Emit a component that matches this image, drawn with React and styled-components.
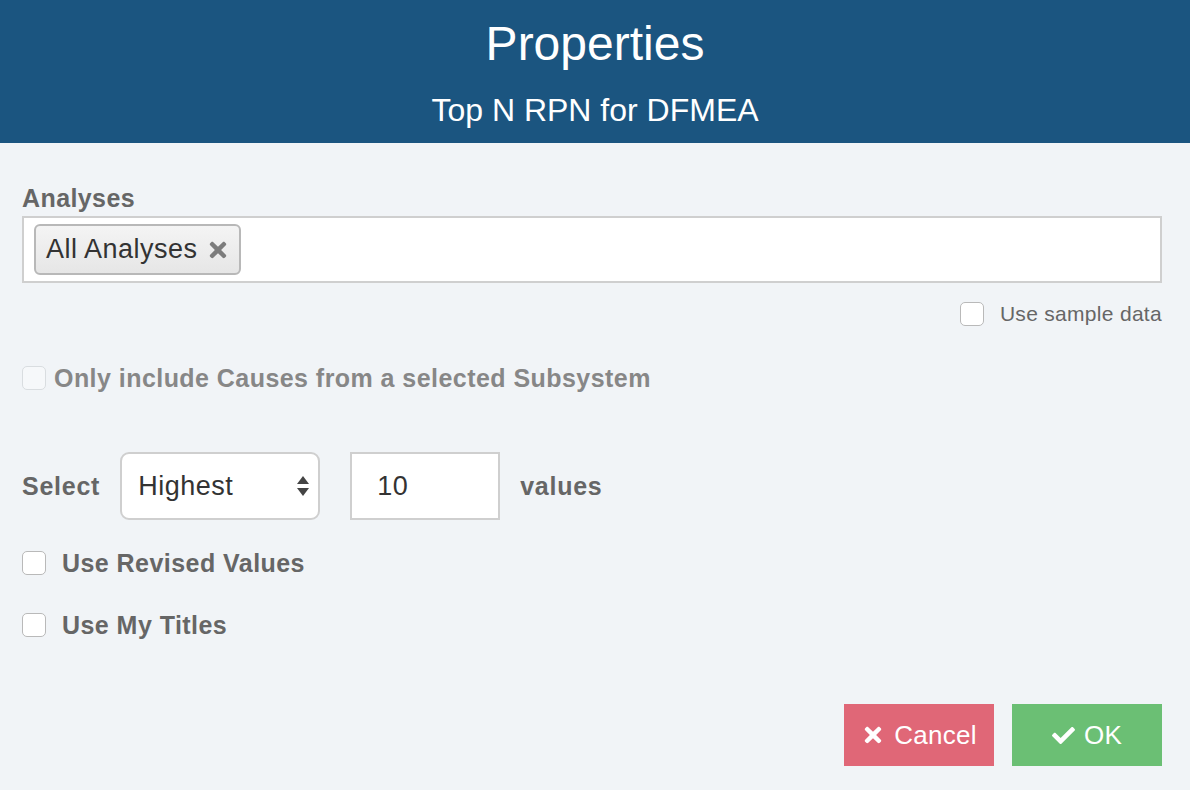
import React from 'react';
import styled, { createGlobalStyle } from 'styled-components';
import { FaTimes, FaCheck } from 'react-icons/fa';

const GlobalStyle = createGlobalStyle`
  html, body {
    margin: 0;
    padding: 0;
    background: #f1f4f7;
    font-family: "Liberation Sans", Arial, Helvetica, sans-serif;
  }
  * { box-sizing: border-box; }
`;

const Page = styled.div`
  width: 1190px;
  height: 790px;
  display: flex;
  flex-direction: column;
  background: #f1f4f7;
`;

const Header = styled.div`
  background: #1b5580;
  color: #fff;
  text-align: center;
  padding: 16px 0 15px;
`;

const Title = styled.div`
  font-size: 48px;
  line-height: 56px;
`;

const Subtitle = styled.div`
  font-size: 32px;
  line-height: 36px;
  margin-top: 20px;
`;

const Content = styled.div`
  display: flex;
  flex-direction: column;
  padding: 41px 28px 0 22px;
`;

const FieldLabel = styled.div`
  font-size: 25px;
  letter-spacing: 0.4px;
  line-height: 28px;
  font-weight: bold;
  color: #666;
  margin-bottom: 4px;
`;

const TagInput = styled.div`
  height: 67px;
  background: #fff;
  border: 2px solid #cfcfcf;
  display: flex;
  align-items: flex-start;
  padding: 6px 10px;
`;

const Tag = styled.div`
  height: 51px;
  display: flex;
  align-items: center;
  gap: 8px;
  padding: 0 9px 0 10px;
  border: 2px solid #b8b8b8;
  border-radius: 6px;
  background: linear-gradient(#f4f4f4, #e6e6e6);
  color: #333;
  font-size: 27px;
  letter-spacing: 0.5px;
  svg { color: #7c7c7c; font-size: 24px; }
`;

const Row = styled.label`
  display: flex;
  align-items: center;
  gap: ${p => p.$gap || 16}px;
  margin-top: ${p => p.$top || 0}px;
  justify-content: ${p => (p.$right ? 'flex-end' : 'flex-start')};
  height: 24px;
`;

const Box = styled.span`
  width: 24px;
  height: 24px;
  border-radius: 5px;
  border: 1px solid ${p => (p.$disabled ? '#d9dde0' : '#b9b9b9')};
  background: ${p => (p.$disabled ? '#f6f8fa' : '#fff')};
  flex: none;
`;

const CheckText = styled.span`
  font-size: ${p => (p.$small ? 21 : 25)}px;
  letter-spacing: ${p => (p.$small ? 0.3 : 0.45)}px;
  font-weight: ${p => (p.$small ? 'normal' : 'bold')};
  color: ${p => (p.$disabled ? '#878787' : '#666')};
`;

const SelectRow = styled.div`
  display: flex;
  align-items: center;
  margin-top: 62px;
  height: 68px;
`;

const InlineLabel = styled.span`
  font-size: 25px;
  letter-spacing: 0.75px;
  font-weight: bold;
  color: #666;
`;

const SelectBox = styled.div`
  width: 200px;
  height: 68px;
  margin: 0 30px 0 20px;
  background: #fff;
  border: 2px solid #cfcfcf;
  border-radius: 9px;
  display: flex;
  align-items: center;
  justify-content: space-between;
  padding: 0 8px 0 16px;
  font-size: 27px;
  letter-spacing: 0.5px;
  color: #333;
`;

const NumberBox = styled.div`
  width: 150px;
  height: 68px;
  margin-right: 20px;
  background: #fff;
  border: 2px solid #cfcfcf;
  display: flex;
  align-items: center;
  padding-left: 25px;
  font-size: 27px;
  letter-spacing: 0.5px;
  color: #333;
`;

const Footer = styled.div`
  display: flex;
  justify-content: flex-end;
  gap: 18px;
  margin-top: 67px;
`;

const Button = styled.button`
  width: 150px;
  height: 62px;
  border: none;
  border-radius: 0;
  background: ${p => p.$bg};
  color: #fff;
  font-family: inherit;
  font-size: 26px;
  letter-spacing: 0.3px;
  display: flex;
  align-items: center;
  justify-content: center;
  gap: 9px;
  cursor: pointer;
  svg { font-size: ${p => p.$icon}px; }
`;

const Arrows = () => (
  <svg width="14" height="22" viewBox="0 0 14 22">
    <path d="M7 1 L13 9 L1 9 Z" fill="#444" />
    <path d="M7 21 L13 13 L1 13 Z" fill="#444" />
  </svg>
);

export default function App() {
  return (
    <Page>
      <GlobalStyle />
      <Header>
        <Title>Properties</Title>
        <Subtitle>Top N RPN for DFMEA</Subtitle>
      </Header>
      <Content>
        <FieldLabel>Analyses</FieldLabel>
        <TagInput>
          <Tag>
            All Analyses <FaTimes />
          </Tag>
        </TagInput>
        <Row $right $top={19}>
          <Box />
          <CheckText $small>Use sample data</CheckText>
        </Row>
        <Row $top={40} $gap={8}>
          <Box $disabled />
          <CheckText $disabled>Only include Causes from a selected Subsystem</CheckText>
        </Row>
        <SelectRow>
          <InlineLabel>Select</InlineLabel>
          <SelectBox>
            Highest <Arrows />
          </SelectBox>
          <NumberBox>10</NumberBox>
          <InlineLabel>values</InlineLabel>
        </SelectRow>
        <Row $top={31}>
          <Box />
          <CheckText>Use Revised Values</CheckText>
        </Row>
        <Row $top={38}>
          <Box />
          <CheckText>Use My Titles</CheckText>
        </Row>
        <Footer>
          <Button $bg="#e06777" $icon={24}>
            <FaTimes /> Cancel
          </Button>
          <Button $bg="#6bbf74" $icon={23}>
            <FaCheck /> OK
          </Button>
        </Footer>
      </Content>
    </Page>
  );
}
